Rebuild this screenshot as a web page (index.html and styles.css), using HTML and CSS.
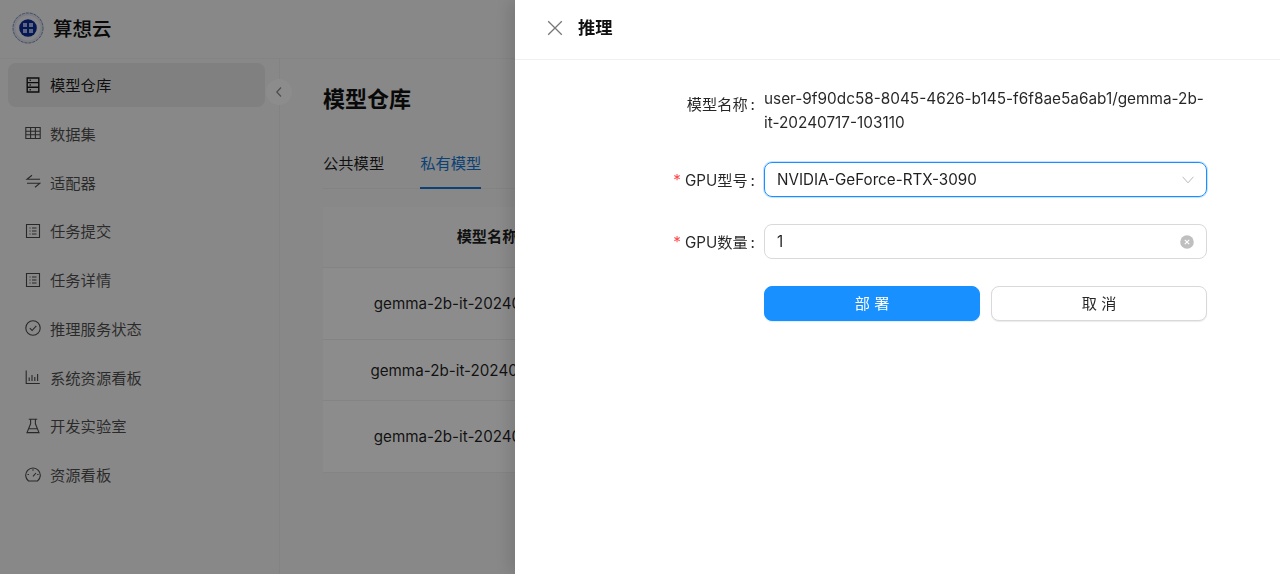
FILE: index.html
```html
<!DOCTYPE html>
<html lang="zh-CN">
<head>
<meta charset="utf-8">
<title>算想云</title>
<link rel="stylesheet" href="styles.css">
</head>
<body>
<div class="app">
  <header class="topbar">
    <svg class="logo" width="32" height="32" viewBox="0 0 32 32">
      <circle cx="16" cy="16" r="15.5" fill="#dfe3ef"/>
      <circle cx="16" cy="16" r="15" fill="none" stroke="#7f90bd" stroke-width="1" stroke-dasharray="3 1"/>
      <circle cx="16" cy="16" r="12.5" fill="#f4f5fa"/>
      <circle cx="16" cy="16" r="8.8" fill="#0a2a9c"/>
      <g fill="#aebbe8">
        <rect x="11" y="11" width="4" height="4"/>
        <rect x="17" y="11" width="4" height="4"/>
        <rect x="11" y="17" width="4" height="4"/>
        <rect x="17" y="17" width="4" height="4"/>
      </g>
    </svg>
    <span class="brand">算想云</span>
  </header>
  <div class="shell">
    <nav class="sidebar">
      <a class="item active">
        <svg class="ico" viewBox="0 0 16 16"><path d="M2.2 1h11.6v14H2.2zM2.2 5.6h11.6M2.2 10.3h11.6M4.6 3.3h1.2M4.6 8h1.2M4.6 12.7h1.2"/></svg>
        <span>模型仓库</span>
      </a>
      <a class="item">
        <svg class="ico" viewBox="0 0 16 16"><path d="M.8 2.5h14.4v11H.8zM.8 6.2h14.4M.8 9.8h14.4M5.6 2.5v11M10.4 2.5v11"/></svg>
        <span>数据集</span>
      </a>
      <a class="item">
        <svg class="ico" viewBox="0 0 16 16"><path d="M7 1.2L2 5.2h13M2 9.2h13l-5 4"/></svg>
        <span>适配器</span>
      </a>
      <a class="item">
        <svg class="ico" viewBox="0 0 16 16"><path d="M1.5 1.5h13v13h-13zM4.5 5h1M7 5h4.5M4.5 8h1M7 8h4.5M4.5 11h1M7 11h4.5"/></svg>
        <span>任务提交</span>
      </a>
      <a class="item">
        <svg class="ico" viewBox="0 0 16 16"><path d="M1.5 1.5h13v13h-13zM4.5 5h1M7 5h4.5M4.5 8h1M7 8h4.5M4.5 11h1M7 11h4.5"/></svg>
        <span>任务详情</span>
      </a>
      <a class="item">
        <svg class="ico" viewBox="0 0 16 16"><circle cx="8" cy="8" r="7.2"/><path d="M4.8 8.2l2.3 2.3 4.2-4.6"/></svg>
        <span>推理服务状态</span>
      </a>
      <a class="item">
        <svg class="ico" viewBox="0 0 16 16"><path d="M1.2 1.5v13h13.6M4.2 12V8.5M7 12V6M9.8 12V8M12.6 12V5"/></svg>
        <span>系统资源看板</span>
      </a>
      <a class="item">
        <svg class="ico" viewBox="0 0 16 16"><path d="M3.8 1.2h8.4M5.6 1.2v4.6L2 14.6h12L10.4 5.8V1.2M3.8 10.8h8.4"/></svg>
        <span>开发实验室</span>
      </a>
      <a class="item">
        <svg class="ico" viewBox="0 0 16 16"><path d="M3.5 14A7.3 7.3 0 1 1 12.5 14zM8 9.3l3-3.3M8 2.2v1.6M2.5 7.5h1.4M12.2 7.5h1.4"/></svg>
        <span>资源看板</span>
      </a>
    </nav>
    <main class="content">
      <h1 class="page-title">模型仓库</h1>
      <div class="tabs">
        <span class="tab">公共模型</span>
        <span class="tab tab-on">私有模型</span>
      </div>
      <div class="table">
        <div class="row head"><div class="cell">模型名称</div></div>
        <div class="row tall"><div class="cell">gemma-2b-it-20240717-103110</div></div>
        <div class="row short"><div class="cell">gemma-2b-it-20240708-120315</div></div>
        <div class="row tall"><div class="cell">gemma-2b-it-20240717-103101</div></div>
      </div>
    </main>
  </div>
  <button class="collapse" type="button">
    <svg width="10" height="12" viewBox="0 0 10 12"><path d="M7 1.5L2.8 6 7 10.5"/></svg>
  </button>
</div>

<div class="mask"></div>

<aside class="drawer">
  <header class="drawer-head">
    <svg class="close" width="16" height="16" viewBox="0 0 16 16"><path d="M1.2 1.2l13.6 13.6M14.8 1.2L1.2 14.8"/></svg>
    <span class="drawer-title">推理</span>
  </header>
  <form class="form">
    <label class="label label-top">模型名称<span class="colon">:</span></label>
    <div class="value">user-9f90dc58-8045-4626-b145-f6f8ae5a6ab1/gemma-2b-it-20240717-103110</div>

    <label class="label"><i class="req">*</i>GPU型号<span class="colon">:</span></label>
    <div class="control focused">
      <span>NVIDIA-GeForce-RTX-3090</span>
      <svg class="chev" width="12" height="8" viewBox="0 0 12 8"><path d="M.6.8L6 6.8 11.4.8"/></svg>
    </div>

    <label class="label"><i class="req">*</i>GPU数量<span class="colon">:</span></label>
    <div class="control">
      <span>1</span>
      <svg class="clear" width="14" height="14" viewBox="0 0 14 14"><circle cx="7" cy="7" r="6.8"/><path d="M4.8 4.8l4.4 4.4M9.2 4.8l-4.4 4.4"/></svg>
    </div>

    <span class="spacer"></span>
    <div class="actions">
      <button class="btn primary" type="button">部 署</button>
      <button class="btn" type="button">取 消</button>
    </div>
  </form>
</aside>
</body>
</html>
```

FILE: styles.css
```css
* { box-sizing: border-box; }
html, body { margin: 0; height: 100%; overflow: hidden; }
body {
  font-family: Inter, "Noto Sans CJK SC", sans-serif;
  font-size: 15.2px;
  color: rgba(0, 0, 0, .88);
  background: #f7f7f7;
}
.app { height: 574px; display: flex; flex-direction: column; position: relative; }
.topbar {
  height: 59px;
  flex: none;
  display: flex;
  align-items: center;
  gap: 9px;
  padding: 0 0 3px 12px;
  border-bottom: 1px solid #f0f0f0;
}
.logo { flex: none; }
.brand { font-size: 19.5px; font-weight: 500; color: #111; }
.shell { flex: 1; display: flex; min-height: 0; }
.sidebar {
  width: 280px;
  flex: none;
  padding: 4px 14px 0 8px;
  border-right: 1px solid #efefef;
  display: flex;
  flex-direction: column;
  gap: 4.75px;
}
.item {
  height: 44px;
  flex: none;
  display: flex;
  align-items: center;
  gap: 9px;
  padding: 0 0 1px 17px;
  border-radius: 8px;
  font-size: 15.3px;
  color: rgba(0, 0, 0, .7);
}
.item span { padding-bottom: 1px; }
.item.active { background: #e9e9e9; color: rgba(0, 0, 0, .9); }
.item.active .ico { stroke-width: 1.4; }
.ico {
  width: 16px;
  height: 16px;
  flex: none;
  fill: none;
  stroke: currentColor;
  stroke-width: 1.1;
}
.content { flex: 1; min-width: 0; padding: 0 0 0 43px; }
.page-title {
  margin: 23px 0 0;
  font-size: 22px;
  line-height: 34px;
  font-weight: 600;
  color: #111;
}
.tabs {
  margin-top: 25px;
  height: 48px;
  display: flex;
  gap: 36px;
  border-bottom: 1px solid #eeeeee;
}
.tab { font-size: 15.3px; line-height: 46px; height: 48px; }
.tab-on { color: #1677d8; border-bottom: 2px solid #1677d8; }
.table { margin-top: 18px; background: #fff; }
.row { border-bottom: 1px solid #f0f0f0; display: flex; align-items: center; }
.cell { width: 326px; text-align: center; white-space: nowrap; font-size: 15.2px; }
.head { height: 61px; padding-bottom: 4px; font-weight: 600; background: #fbfbfb; }
.head .cell { padding-left: 2px; }
.tall { height: 72px; }
.short { height: 61px; }
.collapse {
  position: absolute;
  left: 266px;
  top: 79px;
  width: 26px;
  height: 26px;
  padding: 0;
  border: 0;
  border-radius: 50%;
  background: #fff;
  display: flex;
  align-items: center;
  justify-content: center;
}
.collapse path { fill: none; stroke: #8c8c8c; stroke-width: 1.2; }
.mask { position: fixed; inset: 0; background: rgba(0, 0, 0, .45); }
.drawer {
  position: fixed;
  top: 0;
  right: 0;
  bottom: 0;
  width: 765px;
  background: #fff;
  box-shadow: -6px 0 16px rgba(0, 0, 0, .12);
}
.drawer-head {
  height: 60px;
  display: flex;
  align-items: center;
  gap: 15px;
  padding: 0 0 4px 32px;
  border-bottom: 1px solid #f0f0f0;
}
.close { flex: none; }
.close path { fill: none; stroke: #777; stroke-width: 1.3; }
.drawer-title { font-size: 17.3px; font-weight: 600; color: #111; padding-bottom: 2px; }
.form {
  display: grid;
  grid-template-columns: 240px 443px;
  column-gap: 9px;
  row-gap: 27px;
  padding-top: 27px;
  align-items: center;
}
.label {
  text-align: right;
  white-space: nowrap;
  padding-bottom: 2px;
  color: rgba(0, 0, 0, .85);
}
.label-top { align-self: start; line-height: 24px; padding-top: 6px; padding-bottom: 0; }
.colon { margin-left: 3px; }
.req { font-style: normal; color: #ff4d4f; margin-right: 4px; }
.value { line-height: 24px; font-size: 15.35px; color: rgba(0, 0, 0, .85); }
.control {
  height: 35px;
  display: flex;
  align-items: center;
  justify-content: space-between;
  padding: 0 12px;
  border: 1px solid #d9d9d9;
  border-radius: 8px;
}
.focused { border-color: #1890ff; box-shadow: 0 0 0 1px rgba(24, 144, 255, .25); }
.chev path { fill: none; stroke: #b8b8b8; stroke-width: 1; }
.clear circle { fill: #bfbfbf; }
.clear path { fill: none; stroke: #fff; stroke-width: 1.1; }
.actions { display: grid; grid-template-columns: 216px 216px; gap: 11px; }
.btn {
  height: 35px;
  padding: 0 0 4px;
  border: 1px solid #d9d9d9;
  border-radius: 8px;
  background: #fff;
  font-family: inherit;
  font-size: 15.2px;
  color: rgba(0, 0, 0, .85);
  box-shadow: 0 1px 1px rgba(0, 0, 0, .08);
}
.primary { background: #1890ff; border-color: #1890ff; color: #fff; box-shadow: 0 1px 1px rgba(5, 145, 255, .15); }
```
